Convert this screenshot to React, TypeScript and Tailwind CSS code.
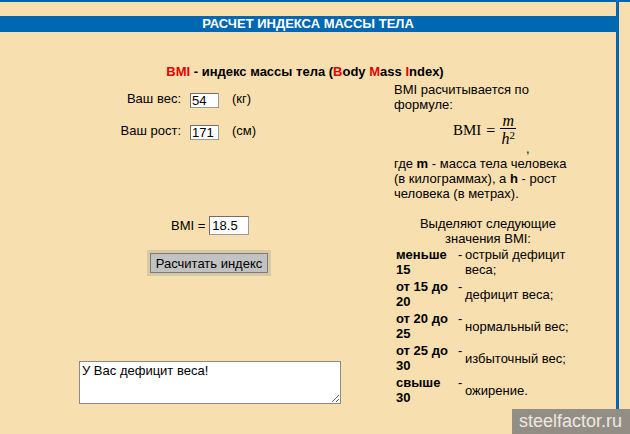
import React from 'react';

const RANGES = [
    { from: ['меньше', '15'], label: ['острый дефицит', 'веса;'] },
    { from: ['от 15 до', '20'], label: ['дефицит веса;'] },
    { from: ['от 20 до', '25'], label: ['нормальный вес;'] },
    { from: ['от 25 до', '30'], label: ['избыточный вес;'] },
    { from: ['свыше', '30'], label: ['ожирение.'] },
];

function Field({ label, value, unit, className }: { label: string; value: string; unit: string; className?: string }) {
    return (
        <div className={'flex h-[15px] items-center ' + (className ?? '')}>
            <span className="mb-[4px] w-[181px] text-right leading-[15px]">{label}</span>
            <input
                readOnly
                value={value}
                className="ml-[9px] h-[15px] w-[29px] border border-[#9a9a9a] border-t-[#6f6f6f] border-l-[#6f6f6f] bg-white pl-[1px] text-[13px] leading-[13px] outline-none"
            />
            <span className="mb-[4px] ml-[13px] leading-[15px]">{unit}</span>
        </div>
    );
}

export default function App() {
    return (
        <div className="relative h-[434px] w-[630px] overflow-hidden bg-[#f7dfb0] font-['Liberation_Sans',Arial,sans-serif] text-[13px] leading-[15px] text-black">
            <div className="h-[2px] bg-[#0067b2]" />
            <div className="flex">
                <div className="h-[432px] w-[619px] shrink-0 border-r-[3px] border-[#0067b2]">
                    <div className="mt-[14px] h-[16px] bg-[#0067b2] text-center text-[13px] font-bold leading-[16px] text-white">
                        РАСЧЕТ ИНДЕКСА МАССЫ ТЕЛА
                    </div>

                    <p className="mt-[32px] pr-[6px] text-center font-bold">
                        <span className="text-[#e60000]">BMI</span> - индекс массы тела (
                        <span className="text-[#e60000]">B</span>ody{' '}
                        <span className="text-[#e60000]">M</span>ass{' '}
                        <span className="text-[#e60000]">I</span>ndex)
                    </p>

                    <div className="flex">
                        <div className="w-[394px] shrink-0">
                            <Field label="Ваш вес:" value="54" unit="(кг)" className="mt-[14px]" />
                            <Field label="Ваш рост:" value="171" unit="(см)" className="mt-[16px] h-[16px]" />

                            <div className="ml-[171px] mt-[76px] flex h-[19px] items-center">
                                <span className="mr-[4px]">BMI =</span>
                                <input
                                    readOnly
                                    value="18.5"
                                    className="h-[19px] w-[40px] border border-[#9a9a9a] border-t-[#6f6f6f] border-l-[#6f6f6f] bg-white pl-[2px] text-[13px] outline-none"
                                />
                            </div>

                            <button
                                type="button"
                                className="ml-[150px] mt-[18px] flex h-[20px] w-[118px] items-center justify-center border border-[#7c7c7c] bg-[#c2c2c2] text-[13px] shadow-[0_0_0_3px_#d8c9a6]"
                            >
                                Расчитать индекс
                            </button>

                            <textarea
                                readOnly
                                value="У Вас дефицит веса!"
                                className="ml-[79px] mt-[88px] block h-[43px] w-[262px] border border-[#8a8a8a] bg-white px-[2px] pt-px text-[13px] leading-[15px] outline-none"
                            />
                        </div>

                        <div className="w-[188px] shrink-0 pt-[3px]">
                            <p>
                                BMI расчитывается по
                                <br />
                                формуле:
                            </p>

                            <div className="flex h-[44px] pl-[59px]">
                                <div className="flex items-center self-start pt-px font-['Liberation_Serif',serif] text-[15px]">
                                    <span className="leading-[15px]">BMI</span>
                                    <span className="mx-[5px] text-[16px] leading-[15px]">=</span>
                                    <span className="flex flex-col items-center">
                                        <span className="border-b border-black px-[2px] text-[16px] italic leading-[15px]">m</span>
                                        <span className="text-[16px] italic leading-[19px]">
                                            h<sup className="text-[11px] not-italic">2</sup>
                                        </span>
                                    </span>
                                </div>
                                <span className="ml-[10px] self-end text-black">,</span>
                            </div>

                            <p>
                                где <b>m</b> - масса тела человека
                                <br />
                                (в килограммах), а <b>h</b> - рост
                                <br />
                                человека (в метрах).
                            </p>

                            <p className="mt-[15px] text-center">
                                Выделяют следующие
                                <br />
                                значения BMI:
                            </p>

                            <div className="ml-[2px] mt-[1px] flex flex-col gap-[2px]">
                                {RANGES.map((range) => (
                                    <div key={range.from.join(' ')} className="flex h-[30px]">
                                        <div className="flex w-[62px] flex-col justify-center font-bold">
                                            <span>{range.from[0]}</span>
                                            <span>{range.from[1]}</span>
                                        </div>
                                        <div className="w-[7px]">-</div>
                                        <div className="flex flex-col justify-center">
                                            {range.label.map((line) => (
                                                <span key={line}>{line}</span>
                                            ))}
                                        </div>
                                    </div>
                                ))}
                            </div>
                        </div>
                    </div>
                </div>
            </div>

            <div className="absolute bottom-0 right-0 flex h-[25px] w-[118px] items-center bg-[#938e85] pl-[7px] text-[18px] leading-[25px] text-[#ece8e0]">
                steelfactor.ru
            </div>
        </div>
    );
}
